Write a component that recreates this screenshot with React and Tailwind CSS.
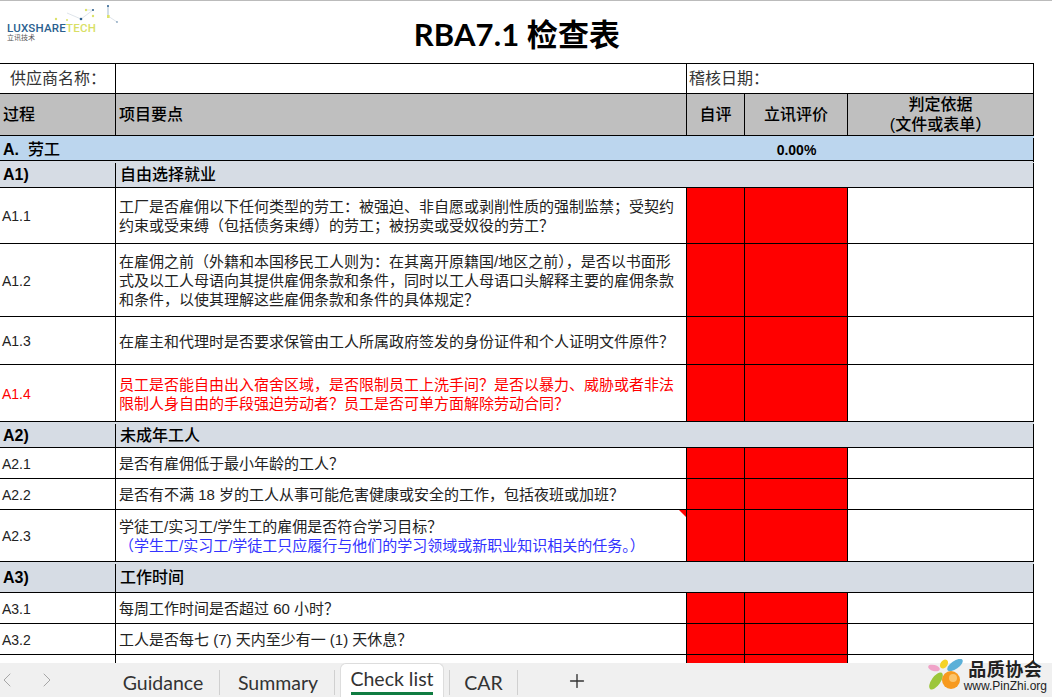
import React from "react";
import { ChevronLeft, ChevronRight, Plus } from "lucide-react";

const columns = "grid grid-cols-[116px_571px_58px_103px_186px] w-[1034px] border-b border-black";

const sections = [
  {
    id: "A1)",
    title: "自由选择就业",
    height: "h-[27px]",
    rows: [
      { id: "A1.1", height: "h-[56px]", lines: ["工厂是否雇佣以下任何类型的劳工：被强迫、非自愿或剥削性质的强制监禁；受契约", "约束或受束缚（包括债务束缚）的劳工；被拐卖或受奴役的劳工？"] },
      { id: "A1.2", height: "h-[73px]", lines: ["在雇佣之前（外籍和本国移民工人则为：在其离开原籍国/地区之前），是否以书面形", "式及以工人母语向其提供雇佣条款和条件，同时以工人母语口头解释主要的雇佣条款", "和条件，以使其理解这些雇佣条款和条件的具体规定？"] },
      { id: "A1.3", height: "h-[48px]", lines: ["在雇主和代理时是否要求保管由工人所属政府签发的身份证件和个人证明文件原件？"] },
      { id: "A1.4", height: "h-[57px]", red: true, lines: ["员工是否能自由出入宿舍区域，是否限制员工上洗手间？是否以暴力、威胁或者非法", "限制人身自由的手段强迫劳动者？员工是否可单方面解除劳动合同？"] },
    ],
  },
  {
    id: "A2)",
    title: "未成年工人",
    height: "h-[26px]",
    rows: [
      { id: "A2.1", height: "h-[31px]", lines: ["是否有雇佣低于最小年龄的工人？"] },
      { id: "A2.2", height: "h-[31px]", lines: ["是否有不满 18 岁的工人从事可能危害健康或安全的工作，包括夜班或加班？"] },
      { id: "A2.3", height: "h-[52px]", flag: true, lines: ["学徒工/实习工/学生工的雇佣是否符合学习目标？"], note: "（学生工/实习工/学徒工只应履行与他们的学习领域或新职业知识相关的任务。）" },
    ],
  },
  {
    id: "A3)",
    title: "工作时间",
    height: "h-[31px]",
    rows: [
      { id: "A3.1", height: "h-[31px]", lines: ["每周工作时间是否超过 60 小时？"] },
      { id: "A3.2", height: "h-[31px]", lines: ["工人是否每七 (7) 天内至少有一 (1) 天休息？"] },
      { id: "", height: "h-[31px]", lines: [] },
    ],
  },
];

const tabs = ["Guidance", "Summary"];

const CheckRow = ({ row }) => (
  <div className={`${columns} ${row.height} ${row.red ? "text-[#ff0000]" : "text-[#222]"}`}>
    <div className="flex items-center border-r border-black pl-[2px] pt-[2px] text-[14px]">{row.id}</div>
    <div className="relative flex flex-col justify-center whitespace-nowrap border-r border-black pl-[3px] pt-[1px] leading-[19px]">
      {row.lines.map((line) => (
        <div key={line}>{line}</div>
      ))}
      {row.note && <div className="text-[#3333ff]">{row.note}</div>}
      {row.flag && (
        <svg className="absolute right-0 top-0" width="7" height="7" viewBox="0 0 7 7">
          <polygon points="0,0 7,0 7,7" fill="#ff0000" />
        </svg>
      )}
    </div>
    <div className="border-r border-black bg-[#ff0000]" />
    <div className="border-r border-black bg-[#ff0000]" />
    <div className="border-r border-black" />
  </div>
);

const LuxshareLogo = () => (
  <div className="flex flex-col pl-[7px]">
    <svg width="115" height="22" viewBox="0 0 115 22" className="shrink-0">
      <g stroke="#c9d3dc" strokeWidth="0.6" fill="none">
        <path d="M60 12 L74 18 L86 9 L79 9" />
        <path d="M101 15 L110 21" />
      </g>
      <path d="M101 5 L101 15" stroke="#7f9fbd" strokeWidth="0.7" fill="none" />
      <g fill="#dde36a">
        <circle cx="49" cy="18" r="1.2" />
        <circle cx="60" cy="19" r="1" />
        <circle cx="79" cy="9" r="1.2" />
        <circle cx="86" cy="15" r="1.2" />
        <rect x="100" y="14" width="2.6" height="3" />
      </g>
      <g fill="#2b5f8f">
        <circle cx="74" cy="18" r="1.3" />
        <circle cx="86" cy="9" r="1" />
        <circle cx="101" cy="5" r="1" />
        <circle cx="110" cy="21" r="0.7" />
      </g>
    </svg>
    <div className="whitespace-nowrap font-['Roboto',sans-serif] text-[11.5px] font-medium leading-[11px] tracking-[0.2px]">
      <span className="text-[#2b5f8f]">LUXSHARE</span>
      <span className="text-[#d9df66]">TECH</span>
    </div>
    <div className="text-[7px] leading-[8px] text-[#555]">立讯技术</div>
  </div>
);

export default function App() {
  return (
    <div className="flex h-[697px] w-[1052px] flex-col overflow-hidden bg-white font-['Liberation_Sans','Noto_Sans_CJK_SC',sans-serif] text-[15px] text-[#222]">
      <div className="flex-1 overflow-hidden border-t border-[#bbb]">
        {/* title */}
        <div className="grid h-[63px] w-[1034px] grid-cols-[1fr_auto_1fr] border-b border-black">
          <LuxshareLogo />
          <div className="pt-[14px] font-['Lato','Noto_Sans_CJK_SC',sans-serif] text-[31px] font-bold leading-[38px] tracking-[0.1px] text-black">RBA7.1 检查表</div>
          <div />
        </div>

        <div className={`${columns} h-[30px] text-[16px] text-[#333]`}>
          <div className="flex items-center border-r border-black pl-[10px]">供应商名称：</div>
          <div className="border-r border-black" />
          <div className="col-span-3 flex items-center border-r border-black pl-[2px]">稽核日期：</div>
        </div>

        <div className={`${columns} h-[42px] bg-[#bfbfbf] text-[16px] font-medium text-black`}>
          <div className="flex items-center border-r border-black pl-[3px]">过程</div>
          <div className="flex items-center border-r border-black pl-[3px]">项目要点</div>
          <div className="flex items-center justify-center border-r border-black">自评</div>
          <div className="flex items-center justify-center border-r border-black">立讯评价</div>
          <div className="flex flex-col items-center justify-center border-r border-black leading-[20px]">
            <span>判定依据</span>
            <span>(文件或表单）</span>
          </div>
        </div>

        <div className={`${columns} h-[25px] bg-[#bcd6ee] pt-[2px] text-[16px] font-medium text-black`}>
          <div className="col-span-2 flex items-center pl-[3px]"><span className="font-bold">A.</span>&nbsp; 劳工</div>
          <div />
          <div className="flex items-center justify-center text-[14px] font-bold">0.00%</div>
          <div className="border-r border-black" />
        </div>

        {sections.map((section) => (
          <div key={section.id}>
            <div className={`${columns} ${section.height} bg-[#d6dce4] pt-[2px] text-[16px] font-medium text-black`}>
              <div className="flex items-center border-r border-black pl-[3px] font-bold">{section.id}</div>
              <div className="col-span-3 flex items-center pl-[4px]">{section.title}</div>
              <div className="border-r border-black" />
            </div>
            {section.rows.map((row) => (
              <CheckRow key={row.id || "next"} row={row} />
            ))}
          </div>
        ))}
      </div>

      {/* sheet tabs */}
      <div className="relative flex h-[34px] shrink-0 items-end bg-[#f0f0f0] font-['Lato',sans-serif] text-[19.5px] text-[#333]">
        <div className="flex h-full w-[105px] items-center gap-[16px] pl-0 text-[#a6a6a6]">
          <ChevronLeft className="ml-[-5px]" size={24} strokeWidth={1} />
          <ChevronRight size={24} strokeWidth={1} />
        </div>
        {tabs.map((tab) => (
          <div key={tab} className="mb-[2px] flex h-[25px] w-[115px] items-center justify-center border-r border-[#d0d0d0] pl-[2px]">
            {tab}
          </div>
        ))}
        <div className="mx-[5px] flex h-full w-[104px] flex-col items-center rounded-t-[6px] border border-b-0 border-[#ddd] bg-white px-[10px]">
          <div className="flex-1 whitespace-nowrap pt-[2px] leading-[26px]">Check list</div>
          <div className="mb-[3px] h-[3px] w-full shrink-0 bg-[#107c41]" />
        </div>
        <div className="mb-[2px] flex h-[25px] w-[69px] items-center justify-center border-l border-r border-[#d0d0d0]">CAR</div>
        <Plus className="mb-[5px] ml-[48px]" size={22} strokeWidth={1.5} />

        {/* watermark over the tab bar */}
        <div className="absolute right-[5px] top-[-4px] flex items-center">
          <svg className="mr-[-1px]" width="38" height="34" viewBox="0 0 38 34">
            <ellipse cx="7" cy="9" rx="6" ry="3" transform="rotate(15 7 9)" fill="#f0a3c8" />
            <ellipse cx="17" cy="5" rx="3.5" ry="5" transform="rotate(35 17 5)" fill="#f5d327" />
            <ellipse cx="28" cy="6" rx="9" ry="4" transform="rotate(-35 28 6)" fill="#5bb0d8" />
            <ellipse cx="9" cy="22" rx="4.5" ry="10" transform="rotate(35 9 22)" fill="#9cc63a" />
            <circle cx="24" cy="21" r="9" fill="#f79a1f" />
            <circle cx="26" cy="19" r="4" fill="#fbc56d" />
          </svg>
          <div className="flex flex-col items-center font-['Liberation_Sans','Noto_Sans_CJK_SC',sans-serif] text-[#222]">
            <span className="text-[18px] font-bold leading-[20px] tracking-[0.5px]">品质协会</span>
            <span className="text-[12px] leading-[13px]">www.PinZhi.org</span>
          </div>
        </div>
      </div>
    </div>
  );
}
